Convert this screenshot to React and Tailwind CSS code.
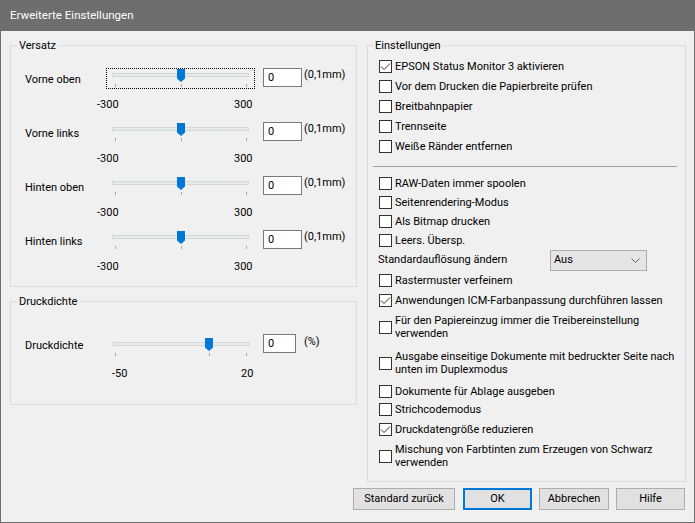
import React from "react";

const Slider = ({ frac, focus, className = "" }) => (
  <div className={`relative w-[149px] h-[21px] shrink-0 ${className}`}>
    {focus && <div className="absolute inset-0 border border-dotted border-black" />}
    <div className="absolute left-[6px] top-[5px] w-[137px] h-[4px] bg-[#e7eaea] border border-[#d6d6d6]" />
    {[0, frac, 1].map((f, i) => (
      <div
        key={i}
        className="absolute top-[16px] w-px h-[3px] bg-[#a8a8a8]"
        style={{ left: Math.round(9 + f * 131) }}
      />
    ))}
    <svg
      className="absolute top-[1px]"
      style={{ left: Math.round(9 + frac * 131) - 4 }}
      width="8"
      height="13"
      viewBox="0 0 8 13"
    >
      <path d="M0 0 H8 V9.5 L4 13 L0 9.5 Z" fill="#0078d7" />
    </svg>
  </div>
);

const SliderRow = ({ label, focus }) => (
  <div className="h-[54px]">
    <div className="flex items-start">
      <span className="w-[81px] mt-[4px] leading-[15px]">{label}</span>
      <Slider frac={0.5} focus={focus} />
      <div className="ml-[8px] w-[39px] h-[19px] border border-[#7a7a7a] bg-white pl-[4px] leading-[17px]">
        0
      </div>
      <span className="ml-[2px] -mt-[1px] leading-[15px]">(0,1mm)</span>
    </div>
    <div className="flex mt-[8px] ml-[72px] leading-[15px]">
      <span className="w-[137px]">-300</span>
      <span>300</span>
    </div>
  </div>
);

const Check = ({ checked }) => (
  <span className="w-[13px] h-[13px] border border-[#333333] bg-white shrink-0 flex items-center justify-center mr-[3px]">
    {checked && (
      <svg width="11" height="11" viewBox="0 0 11 11">
        <path d="M1 5.5 L4 8.5 L10 2.5" fill="none" stroke="#333333" strokeWidth="1" />
      </svg>
    )}
  </span>
);

const Row = ({ lines, checked, h }) => (
  <div className={`flex items-center pl-[11px] ${h}`}>
    <Check checked={checked} />
    <span className="leading-[13px]">
      {lines.map((l, i) => (
        <span key={i} className="block whitespace-nowrap">
          {l}
        </span>
      ))}
    </span>
  </div>
);

const topRows = [
  { lines: ["EPSON Status Monitor 3 aktivieren"], checked: true, h: "h-[20px]" },
  { lines: ["Vor dem Drucken die Papierbreite prüfen"], h: "h-[20px]" },
  { lines: ["Breitbahnpapier"], h: "h-[20px]" },
  { lines: ["Trennseite"], h: "h-[20px]" },
  { lines: ["Weiße Ränder entfernen"], h: "h-[20px]" },
];

const midRows = [
  { lines: ["RAW-Daten immer spoolen"], h: "h-[19px]" },
  { lines: ["Seitenrendering-Modus"], h: "h-[19px]" },
  { lines: ["Als Bitmap drucken"], h: "h-[19px]" },
  { lines: ["Leers. Übersp."], h: "h-[19px]" },
];

const lowRows = [
  { lines: ["Rastermuster verfeinern"], h: "h-[19px]" },
  { lines: ["Anwendungen ICM-Farbanpassung durchführen lassen"], checked: true, h: "h-[20px]" },
  { lines: ["Für den Papiereinzug immer die Treibereinstellung", "verwenden"], h: "h-[34px]" },
  { lines: ["Ausgabe einseitige Dokumente mit bedruckter Seite nach", "unten im Duplexmodus"], h: "h-[38px]" },
  { lines: ["Dokumente für Ablage ausgeben"], h: "h-[18px]" },
  { lines: ["Strichcodemodus"], h: "h-[19px]" },
  { lines: ["Druckdatengröße reduzieren"], checked: true, h: "h-[20px]" },
  { lines: ["Mischung von Farbtinten zum Erzeugen von Schwarz", "verwenden"], h: "h-[34px]" },
];

const Button = ({ children, w, primary }) => (
  <button
    className={`h-[22px] ${w} bg-[#e1e1e1] flex items-center justify-center ${
      primary ? "border-2 border-[#0078d7]" : "border border-[#adadad]"
    }`}
  >
    {children}
  </button>
);

export default function App() {
  return (
    <div className="w-[695px] h-[523px] flex flex-col bg-[#f0f0f0] border-x border-b border-[#6e6e6e] text-[11px] text-black font-[Roboto,sans-serif] overflow-hidden">
      <div className="h-[31px] shrink-0 bg-[#6e6e6e] text-white text-[11.5px] flex items-center pl-[9px]">
        Erweiterte Einstellungen
      </div>

      <div className="flex items-start pl-[9px] pt-[7px] gap-[10px]">
        {/* left column */}
        <div className="flex flex-col w-[347px]">
          <fieldset className="border border-[#dcdcdc]">
            <legend className="ml-[6px] px-[2px] leading-[15px]">Versatz</legend>
            <div className="pt-[15px] pb-[2px] pl-[14px]">
              <SliderRow label="Vorne oben" focus />
              <SliderRow label="Vorne links" />
              <SliderRow label="Hinten oben" />
              <SliderRow label="Hinten links" />
            </div>
          </fieldset>

          <fieldset className="mt-[7px] border border-[#dcdcdc]">
            <legend className="ml-[6px] px-[2px] leading-[15px]">Druckdichte</legend>
            <div className="pt-[25px] pb-[23px] pl-[14px]">
              <div className="flex items-start">
                <span className="w-[81px] mt-[4px] leading-[15px]">Druckdichte</span>
                <Slider frac={50 / 70} className="mt-[3px]" />
                <div className="ml-[8px] w-[33px] h-[19px] border border-[#7a7a7a] bg-white pl-[4px] leading-[17px]">
                  0
                </div>
                <span className="ml-[8px] leading-[15px]">(%)</span>
              </div>
              <div className="flex mt-[8px] ml-[87px] leading-[15px]">
                <span className="w-[129px]">-50</span>
                <span>20</span>
              </div>
            </div>
          </fieldset>
        </div>

        {/* right column */}
        <fieldset className="w-[319px] border border-[#dcdcdc]">
          <legend className="ml-[5px] px-[2px] leading-[15px]">Einstellungen</legend>
          <div className="pt-[3px] pb-[8px] flex flex-col">
            {topRows.map((r, i) => (
              <Row key={i} {...r} />
            ))}
            <div className="mt-[10px] mb-[7px] ml-[5px] w-[304px] border-t border-[#a0a0a0]" />
            {midRows.map((r, i) => (
              <Row key={i} {...r} />
            ))}
            <div className="flex items-center h-[21px] pl-[10px]">
              <span className="w-[172px]">Standardauflösung ändern</span>
              <div className="w-[97px] h-[21px] bg-[#e5e5e5] border border-[#acacac] flex items-center justify-between pl-[3px] pr-[6px]">
                <span>Aus</span>
                <svg width="9" height="5" viewBox="0 0 9 5">
                  <path d="M0.5 0.5 L4.5 4.5 L8.5 0.5" fill="none" stroke="#606060" strokeWidth="1" />
                </svg>
              </div>
            </div>
            {lowRows.map((r, i) => (
              <Row key={i} {...r} />
            ))}
          </div>
        </fieldset>
      </div>

      <div className="flex justify-end mt-[6px] pr-[9px]">
        <Button w="w-[102px]">Standard zurück</Button>
        <div className="ml-[8px]">
          <Button w="w-[69px]" primary>
            OK
          </Button>
        </div>
        <div className="ml-[7px]">
          <Button w="w-[70px]">Abbrechen</Button>
        </div>
        <div className="ml-[7px]">
          <Button w="w-[69px]">Hilfe</Button>
        </div>
      </div>
    </div>
  );
}
